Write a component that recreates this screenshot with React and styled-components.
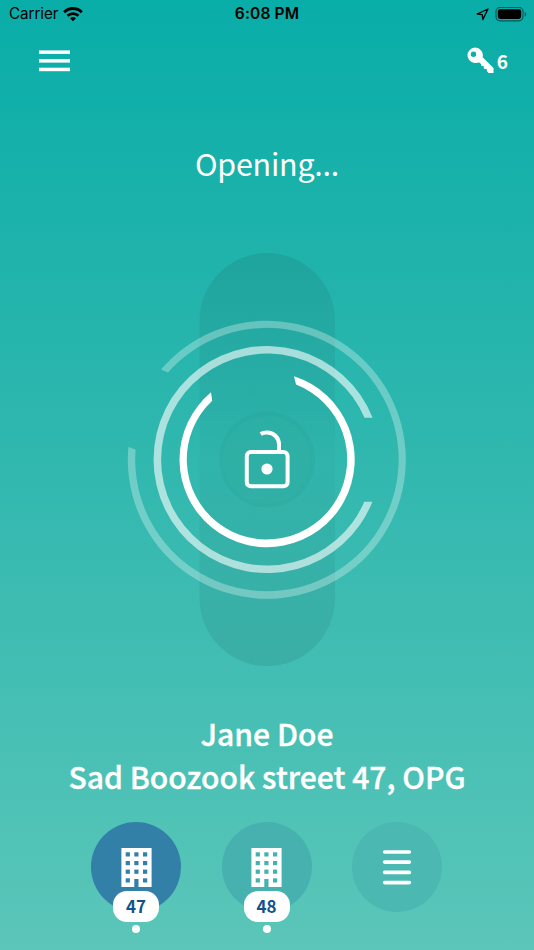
import React from "react";
import styled, { createGlobalStyle } from "styled-components";

const GlobalStyle = createGlobalStyle`
  * {
    box-sizing: border-box;
  }
  body {
    margin: 0;
  }
`;

const Screen = styled.main`
  display: flex;
  flex-direction: column;
  align-items: center;
  width: 534px;
  height: 950px;
  overflow: hidden;
  color: white;
  font-family: "Noto Sans CJK JP", "Noto Sans", sans-serif;
  background: linear-gradient(#09ada8 0%, #32b8af 50%, #5bc6b9 100%);
`;

const StatusBar = styled.div`
  display: grid;
  grid-template-columns: 1fr auto 1fr;
  align-items: center;
  width: 100%;
  height: 28px;
  padding: 0 7px 0 9px;
  color: black;
  font-family: Inter, sans-serif;
  font-size: 15px;
  line-height: 28px;
`;

const StatusGroup = styled.div`
  display: flex;
  align-items: center;
  justify-content: ${(props) => (props.$end ? "flex-end" : "flex-start")};
  gap: ${(props) => (props.$end ? "6px" : "5px")};
`;

const Carrier = styled.span`
  font-size: 15.2px;
  letter-spacing: -0.05px;
`;

const Clock = styled.span`
  margin-right: 2px;
  font-size: 15.5px;
  font-weight: 600;
  letter-spacing: 0.15px;
`;

const Header = styled.header`
  display: flex;
  justify-content: space-between;
  align-items: center;
  width: 100%;
  height: 66px;
  padding: 0 26px 0 39px;
`;

const Keys = styled.div`
  display: flex;
  align-items: center;
  gap: 3px;
  margin-bottom: 1px;
  font-size: 19px;
  font-weight: 700;
  line-height: 28px;
`;

const Icon = styled.svg`
  display: block;
  flex: none;
`;

const Title = styled.h1`
  height: 46px;
  margin: 46px 0 0;
  font-size: 30.4px;
  font-weight: 400;
  line-height: 46px;
  letter-spacing: -0.2px;
`;

const Lock = styled.svg`
  display: block;
  flex: none;
  margin-top: 67px;
`;

const Address = styled.div`
  margin-top: 45px;
  font-size: 30.1px;
  font-weight: 500;
  line-height: 43px;
  text-align: center;
  white-space: nowrap;
  -webkit-text-stroke: 0.35px white;
`;

const AddressLine = styled.p`
  margin: 0;
`;

const Doors = styled.nav`
  display: flex;
  gap: 40.5px;
  margin: 24px 1px 0 0;
`;

const Door = styled.div`
  display: flex;
  flex-direction: column;
  align-items: center;
  width: 90px;
`;

const DoorCircle = styled.div`
  display: flex;
  align-items: center;
  justify-content: center;
  width: 90px;
  height: 90px;
  border-radius: 50%;
  background: ${(props) => props.$color};
`;

const DoorNumber = styled.div`
  width: 46px;
  height: 31px;
  margin-top: -21px;
  border-radius: 14px;
  background: white;
  color: #12528a;
  font-size: 17px;
  font-weight: 700;
  line-height: 30px;
  text-align: center;
`;

const Dot = styled.div`
  width: 8px;
  height: 8px;
  margin-top: 3px;
  border-radius: 50%;
  background: white;
`;

const doors = [
  { number: 47, color: "#327fa7" },
  { number: 48, color: "#47b1af" },
];

const windowRows = [4.3, 13, 21.6, 30.3];
const windowCols = [4.7, 13.3, 22];

function WifiIcon() {
  return (
    <Icon width="20" height="15" viewBox="0 0 20 15" fill="none" stroke="black">
      <path d="M1.2 5.2C6.2.2 13.8.2 18.8 5.2" strokeWidth="2.9" />
      <path d="M4.5 8.8C7.7 5.8 12.3 5.8 15.5 8.8" strokeWidth="2.7" />
      <path d="M7 11.3c1.8-1.6 4.2-1.6 6 0l-3 3z" fill="black" stroke="none" />
    </Icon>
  );
}

function LocationIcon() {
  return (
    <Icon width="13" height="13" viewBox="0 0 13 13">
      <path
        d="M12 1 1.2 6l5 .6.6 5z"
        fill="none"
        stroke="black"
        strokeWidth="1.3"
        strokeLinejoin="round"
      />
    </Icon>
  );
}

function BatteryIcon() {
  return (
    <Icon width="32" height="15" viewBox="0 0 32 15">
      <rect
        x="1"
        y=".4"
        width="27"
        height="13.4"
        rx="4"
        fill="none"
        stroke="black"
        strokeOpacity=".48"
        strokeWidth="1.2"
      />
      <rect x="2.8" y="2.3" width="23.4" height="9.6" rx="2.3" />
      <path d="M29.7 4.9c2 .8 2 3.8 0 4.6z" fillOpacity=".5" />
    </Icon>
  );
}

function MenuIcon() {
  return (
    <Icon width="31" height="22" viewBox="0 0 31 22" fill="white">
      <rect y=".4" width="31" height="3.5" />
      <rect y="9.1" width="31" height="3.5" />
      <rect y="17.7" width="31" height="3.5" />
    </Icon>
  );
}

function KeyIcon() {
  return (
    <Icon width="27" height="27" viewBox="0 0 27 27">
      <path
        fill="white"
        fillRule="evenodd"
        d="M8.2.6a7.7 7.7 0 1 0 3 14.8l1.5.4 1.5 1.5v1.4l2.4.3.3 2.7 2.8.2.2 2.2 1.6 1.9h5v-5.1L15.6 10.3A7.7 7.7 0 0 0 8.2.6Zm-1.7 3.9a2.7 2.7 0 1 1 0 5.4 2.7 2.7 0 0 1 0-5.4Z"
      />
    </Icon>
  );
}

function BuildingIcon() {
  return (
    <Icon width="31" height="39" viewBox="0 0 31 39">
      <mask id="windows">
        <rect width="31" height="39" fill="white" />
        {windowRows.map((y) =>
          windowCols.map((x) =>
            x === 13.3 && y === 30.3 ? null : (
              <rect key={`${x}-${y}`} x={x} y={y} width="4.2" height="4.2" />
            )
          )
        )}
        <rect x="13.3" y="31" width="4.2" height="8" />
      </mask>
      <rect x=".4" width="30.2" height="39" fill="white" mask="url(#windows)" />
    </Icon>
  );
}

function ListIcon() {
  return (
    <Icon width="30" height="37" viewBox="0 0 30 37">
      <path
        d="M2.6 3h24.8M2.6 13.1h24.8M2.6 23.4h24.8M2.6 33.6h24.8"
        stroke="white"
        strokeWidth="3.6"
        strokeLinecap="round"
      />
    </Icon>
  );
}

function LockDial() {
  return (
    <Lock width="280" height="414" viewBox="-140 -206.6 280 414">
      <defs>
        <linearGradient id="track" x1="0" y1="0" x2="0" y2="1">
          <stop offset="0" stopColor="#1c6e6b" stopOpacity=".22" />
          <stop offset=".5" stopColor="#1c6e6b" stopOpacity=".05" />
          <stop offset="1" stopColor="#1c6e6b" stopOpacity=".19" />
        </linearGradient>
      </defs>
      <rect
        x="-67.5"
        y="-206.5"
        width="135.5"
        height="413"
        rx="67.7"
        fill="url(#track)"
      />
      <circle r="48" fill="#1c6e6b" fillOpacity=".08" />
      <circle r="44" fill="#32b4aa" fillOpacity=".35" />

      {/* rings */}
      <path
        d="M-106-90A139 139 0 1 1-138.6-12.5L-131.4-10A131.7 131.7 0 1 0-99-87Z"
        fill="white"
        fillOpacity=".3"
      />
      <path
        d="M105.6-41.8A113.5 113.5 0 1 0 105.4 42.2H97.3A106 106 0 1 1 97.5-41.8Z"
        fill="white"
        fillOpacity=".6"
      />
      <path
        d="M27-83.4A87.6 87.6 0 1 1-56-67.3L-54.8-58.8A80.2 80.2 0 1 0 29-75Z"
        fill="white"
      />

      <g fill="none" stroke="white" strokeWidth="4">
        <rect x="-20.2" y="-7.7" width="40.8" height="34.3" rx="4" />
        <path d="M-6.3-25.6C-4.4-26.8-2.3-27 0-27 6.8-27 12-22 12-15.2V-8" />
      </g>
      <circle cy="9.4" r="5.6" fill="white" />
    </Lock>
  );
}

function App() {
  return (
    <Screen>
      <GlobalStyle />
      <StatusBar>
        <StatusGroup>
          <Carrier>Carrier</Carrier>
          <WifiIcon />
        </StatusGroup>
        <Clock>6:08 PM</Clock>
        <StatusGroup $end>
          <LocationIcon />
          <BatteryIcon />
        </StatusGroup>
      </StatusBar>

      <Header>
        <MenuIcon />
        <Keys>
          <KeyIcon />
          <span>6</span>
        </Keys>
      </Header>

      <Title>Opening...</Title>
      <LockDial />

      <Address>
        <AddressLine>Jane Doe</AddressLine>
        <AddressLine>Sad Boozook street 47, OPG</AddressLine>
      </Address>

      <Doors>
        {doors.map((door) => (
          <Door key={door.number}>
            <DoorCircle $color={door.color}>
              <BuildingIcon />
            </DoorCircle>
            <DoorNumber>{door.number}</DoorNumber>
            <Dot />
          </Door>
        ))}
        <Door>
          <DoorCircle $color="#4bb8b1">
            <ListIcon />
          </DoorCircle>
        </Door>
      </Doors>
    </Screen>
  );
}

export default App;
